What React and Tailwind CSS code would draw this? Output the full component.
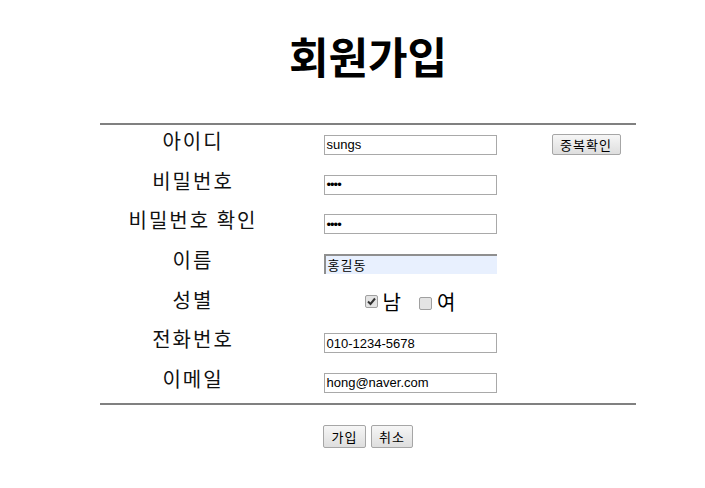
const labelFont = { fontFamily: '"Noto Sans CJK KR", "Noto Sans", sans-serif' };

const rows = [
  { label: '아이디', value: 'sungs', check: true },
  { label: '비밀번호', value: '••••', pw: true },
  { label: '비밀번호 확인', value: '••••', pw: true },
  { label: '이름', value: '홍길동', filled: true },
  { label: '성별', gender: true },
  { label: '전화번호', value: '010-1234-5678' },
  { label: '이메일', value: 'hong@naver.com' },
];

const Box = ({ checked }) => (
  <span className="inline-flex w-[13px] h-[13px] items-center justify-center rounded-[2px] border border-[#a0a0a0] bg-[#e4e4e4]">
    {checked && (
      <svg width="9" height="9" viewBox="0 0 9 9">
        <path d="M1 4.5 L3.5 7 L8 1.5" stroke="#333" strokeWidth="2" fill="none" />
      </svg>
    )}
  </span>
);

const Btn = ({ children, className = '' }) => (
  <button
    className={`border border-[#a6a6a6] rounded-[2px] bg-gradient-to-b from-[#f6f6f6] to-[#dedede] text-[13px] tracking-[1px] text-black ${className}`}
    style={labelFont}
  >
    {children}
  </button>
);

const App = () => {
  return (
    <div className="min-h-screen bg-white">
      <div className="ml-[100px] w-[536px] flex flex-col">
        <h1 className="mt-[30px] h-[50px] text-center text-[43px] leading-[50px] font-bold text-black" style={labelFont}>회원가입</h1>
        <div className="mt-[43px] border-y-2 border-[#808080] grid grid-cols-[184px_252px_100px] grid-rows-[repeat(7,1fr)] h-[282px]">
          {rows.map((r) => (
            <div key={r.label} className="contents">
              <div className="flex items-center justify-center pb-[8px] pl-[2px] text-[20px] tracking-[2px] text-[#111]" style={labelFont}>{r.label}</div>
              <div className="flex items-center justify-center">
                {r.gender ? (
                  <div className="flex items-center pb-[4px] text-[20px] text-black" style={labelFont}>
                    <Box checked />
                    <span className="ml-[5px]">남</span>
                    <span className="ml-[18px]"><Box /></span>
                    <span className="ml-[5px]">여</span>
                  </div>
                ) : (
                  <div
                    className={`w-[173px] h-[20px] flex items-center pl-[2px] text-black ${
                      r.filled
                        ? 'bg-[#e8f0fe] border-t-2 border-l-2 border-[#8f8f8f] text-[13px] tracking-[1px]'
                        : 'border border-[#a9a9a9] text-[13px]'
                    } ${r.pw ? 'text-[9px] tracking-[-1px]' : ''}`}
                    style={{ fontFamily: r.filled ? labelFont.fontFamily : '"Liberation Sans", Arial, sans-serif' }}
                  >
                    {r.value}
                  </div>
                )}
              </div>
              <div className="flex items-center justify-center">
                {r.check && <Btn className="w-[69px] h-[21px] -mt-[1px]">중복확인</Btn>}
              </div>
            </div>
          ))}
        </div>
        <div className="mt-[20px] flex justify-center gap-[5px]">
          <Btn className="w-[43px] h-[23px]">가입</Btn>
          <Btn className="w-[42px] h-[23px]">취소</Btn>
        </div>
      </div>
    </div>
  );
};

export default App;
